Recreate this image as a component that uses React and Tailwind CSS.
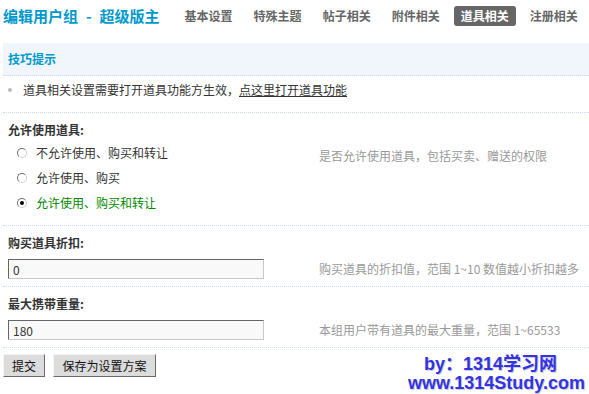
import React from 'react'

const tabs = ['基本设置', '特殊主题', '帖子相关', '附件相关', '道具相关', '注册相关']

function Radio({ checked, label }) {
  return (
    <label className="flex items-center h-[25px] pl-[14px]">
      <span className="w-[10px] h-[10px] rounded-full border border-[#6f6f6f] border-r-[#d0d0d0] border-b-[#d0d0d0] bg-white flex items-center justify-center">
        {checked && <span className="w-[4px] h-[4px] rounded-full bg-black"></span>}
      </span>
      <span className={`ml-[9px] leading-[12px] ${checked ? 'text-[#008800]' : 'text-[#333]'}`}>{label}</span>
    </label>
  )
}

function TextRow({ label, value, tip }) {
  return (
    <div className="ml-[3px] h-[61px] border-b border-dotted border-[#c6dbee] pt-[11px]">
      <div className="pl-[5px] leading-[12px] font-bold text-[#333]">{label}</div>
      <div className="flex items-center mt-[10px]">
        <input
          defaultValue={value}
          className="ml-[5px] w-[256px] h-[20px] bg-[#f9f9f9] border border-[#666] border-r-[#c8c8c8] border-b-[#c8c8c8] px-[4px] text-[12px] text-[#333] outline-none"
        />
        <span className="ml-[55px] text-[#999] leading-[12px] whitespace-nowrap">{tip}</span>
      </div>
    </div>
  )
}

export default function App() {
  return (
    <div className="relative w-[589px] h-[394px] overflow-hidden bg-white text-[12px] font-['Noto_Sans_CJK_SC',sans-serif]">
      {/* Header */}
      <div className="flex items-center h-[32px] pl-[3px]">
        <h1 className="flex text-[15px] font-bold text-[#0099cc] leading-[16px] whitespace-nowrap">
          编辑用户组<span className="mx-[8px]">-</span>超级版主
        </h1>
        <nav className="flex ml-[18px] gap-[7px]">
          {tabs.map((t) => (
            <span
              key={t}
              className={`px-[7px] h-[20px] flex items-center rounded-[3px] font-bold leading-[12px] ${
                t === '道具相关' ? 'bg-[#666] text-white' : 'text-[#666]'
              }`}
            >
              {t}
            </span>
          ))}
        </nav>
      </div>

      {/* Tips */}
      <div className="mt-[11px] ml-[3px] h-[33px] bg-[#f0f6fc] border-b border-dotted border-[#c6dbee] flex items-center pl-[5px]">
        <span className="font-bold text-[#0099cc] leading-[12px]">技巧提示</span>
      </div>
      <div className="ml-[3px] h-[37px] border-b border-dotted border-[#c6dbee] flex items-start pt-[8px]">
        <span className="ml-[5px] mt-[4px] w-[4px] h-[4px] rounded-full bg-[#bbb]"></span>
        <span className="ml-[11px] leading-[12px] text-[#333]">
          道具相关设置需要打开道具功能方生效，<a href="#" className="underline text-[#333]">点这里打开道具功能</a>
        </span>
      </div>

      {/* Allow items */}
      <div className="ml-[3px] h-[113px] border-b border-dotted border-[#c6dbee] pt-[11px]">
        <div className="pl-[5px] leading-[12px] font-bold text-[#333]">允许使用道具:</div>
        <div className="flex mt-[4px]">
          <div className="w-[316px]">
            <Radio label="不允许使用、购买和转让" />
            <Radio label="允许使用、购买" />
            <Radio checked label="允许使用、购买和转让" />
          </div>
          <div className="pt-[10px] leading-[12px] text-[#999] whitespace-nowrap">是否允许使用道具，包括买卖、赠送的权限</div>
        </div>
      </div>

      <TextRow label="购买道具折扣:" value="0" tip="购买道具的折扣值，范围 1~10 数值越小折扣越多" />
      <TextRow label="最大携带重量:" value="180" tip="本组用户带有道具的最大重量，范围 1~65533" />

      {/* Buttons */}
      <div className="flex gap-[8px] ml-[3px] mt-[6px]">
        <button className="h-[23px] w-[42px] bg-[#dcdcdc] border border-[#f4f4f4] border-r-[#6a6a6a] border-b-[#6a6a6a] text-[#111] leading-[12px]">提交</button>
        <button className="h-[23px] w-[103px] bg-[#dcdcdc] border border-[#f4f4f4] border-r-[#6a6a6a] border-b-[#6a6a6a] text-[#111] leading-[12px]">保存为设置方案</button>
      </div>

      {/* Watermark */}
      <div className="absolute right-[4px] bottom-[1px] flex flex-col items-end font-['Liberation_Sans',sans-serif] font-bold text-[18px] leading-[19px] text-[#3333e6] [text-shadow:1px_1px_0_#cfcfcf,-1px_-1px_0_#fff]">
        <div className="mr-[28px]">by<span className="font-['Noto_Sans_CJK_SC',sans-serif]">：</span>1314<span className="font-['Noto_Sans_CJK_SC',sans-serif]">学习网</span></div>
        <div>www.1314Study.com</div>
      </div>
    </div>
  )
}
